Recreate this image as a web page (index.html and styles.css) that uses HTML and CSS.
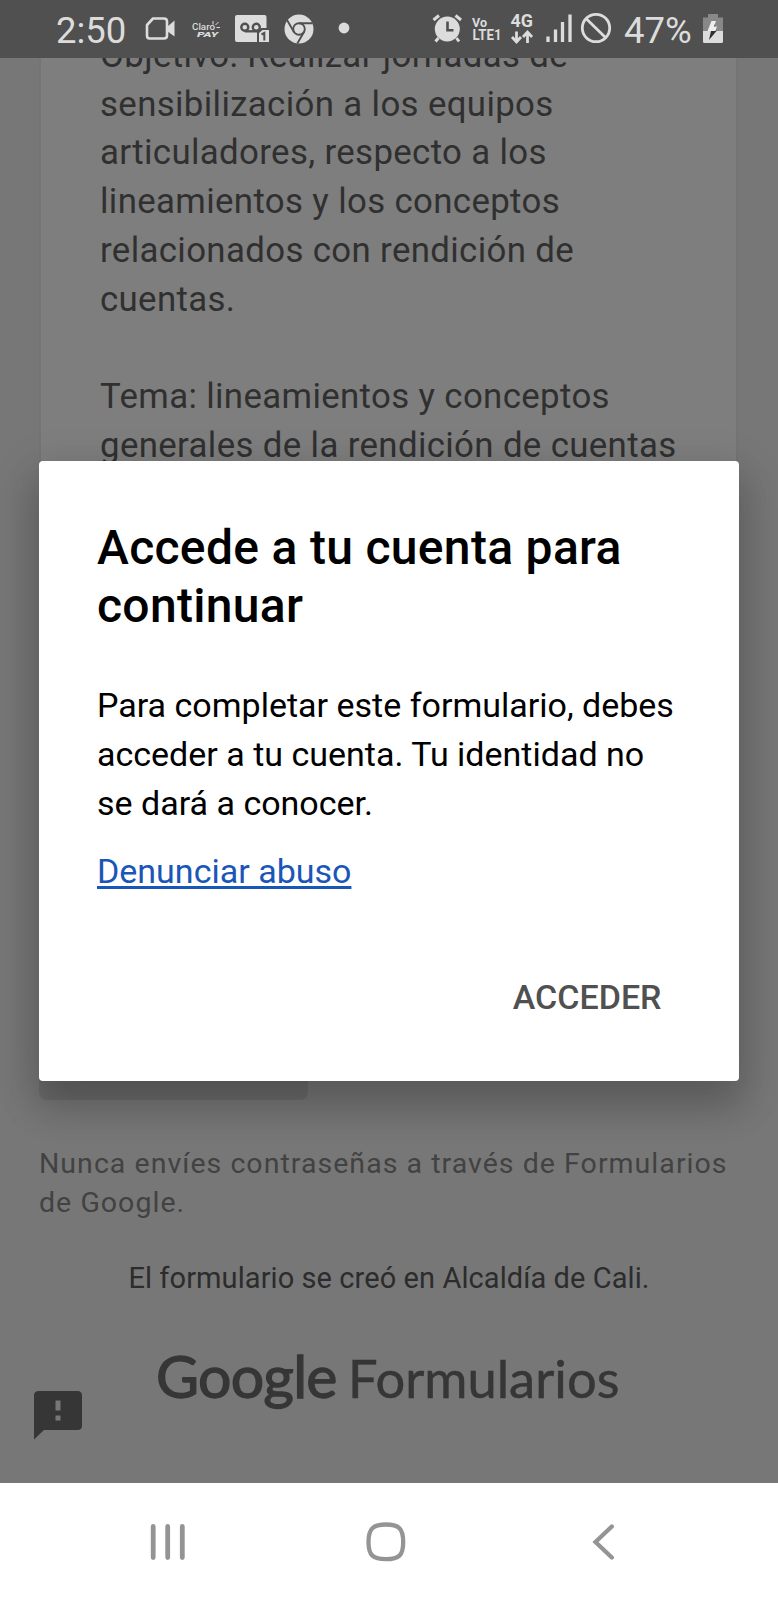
FILE: index.html
```html
<!DOCTYPE html>
<html lang="es">
<head>
<meta charset="utf-8">
<title>Formularios de Google</title>
<link rel="stylesheet" href="styles.css">
</head>
<body>
<div class="screen">
  <header class="status">
    <span class="clock">2:50</span>
    <svg class="ic cam" width="32" height="28" viewBox="144 15 32 28"><path d="M153 18.5H164Q167 18.5 167 21.5V35.500Q167 38.500 164 38.500H149.500Q147 38.500 147 35.500V25Z" fill="none" stroke="#dcdcdc" stroke-width="2.600" stroke-linejoin="round"/><path d="M167 27L174.500 20.500V36.500L167 31Z" fill="#dcdcdc"/></svg>
    <svg class="ic claro" width="30" height="20" viewBox="191 19 30 20"><text x="192" y="29.600" font-size="9.500" font-weight="500" textLength="23" lengthAdjust="spacingAndGlyphs">Claro</text><text x="197" y="36.800" font-size="7.500" font-weight="900" font-style="italic" textLength="21" lengthAdjust="spacingAndGlyphs">PAY</text><path d="M213 24.500V21M215.500 25L218.500 22M216.500 27.500H220" stroke="#dcdcdc" stroke-width="1"/></svg>
    <svg class="ic vm" width="36" height="30" viewBox="234 14 36 30"><rect x="235" y="15" width="31.500" height="27" rx="2" fill="#dcdcdc"/><g fill="none" stroke="#505050" stroke-width="2.400"><circle cx="244.800" cy="27.300" r="3.500"/><circle cx="256.300" cy="27.300" r="3.500"/><path d="M244.800 31.300H258"/></g><path d="M257 43V32L261 28H270V43Z" fill="#505050"/><path d="M259 42V33L262.500 30H269V42Z" fill="#dcdcdc"/><path d="M261.500 34.500L264.300 33V40.500" fill="none" stroke="#505050" stroke-width="2"/></svg>
    <svg class="ic chrome" width="30" height="30" viewBox="283.500 13.500 30 30"><circle cx="298.500" cy="28.500" r="14.500" fill="#dcdcdc"/><g fill="none" stroke="#505050" stroke-width="1.900"><circle cx="298.500" cy="28.500" r="5.800"/><path d="M298.500 22.700H312M293.500 31.400L286.500 19.500M303.500 31.400L296.800 43"/></g></svg>
    <svg class="ic dot" width="12" height="12" viewBox="0 0 12 12"><circle cx="6" cy="6" r="5.400" fill="#dcdcdc"/></svg>
    <svg class="ic alarm" width="32" height="32" viewBox="431 12 32 32"><circle cx="447.300" cy="29" r="12.500" fill="#dcdcdc"/><path d="M433.500 20L439 15.500M461 20L455.500 15.500M438.500 38L435.500 41.500M456.500 38L459 41.500" stroke="#dcdcdc" stroke-width="3"/><path d="M447.500 21.500V30.300H453.500" fill="none" stroke="#505050" stroke-width="2.600"/></svg>
    <svg class="ic volte" width="32" height="26" viewBox="471 16 32 26"><text x="472" y="27.300" font-size="13.500" font-weight="700" textLength="15" lengthAdjust="spacingAndGlyphs">Vo</text><text x="472.500" y="40" font-size="14" font-weight="700" textLength="29" lengthAdjust="spacingAndGlyphs">LTE1</text></svg>
    <svg class="ic net" width="24" height="32" viewBox="510 13 24 32"><text x="510.500" y="27.300" font-size="17.500" font-weight="700" textLength="22.500" lengthAdjust="spacingAndGlyphs">4G</text><path d="M516.500 31.500V41M512 37L516.500 42L521 37M527.500 43V33M523 37L527.500 32L532 37" fill="none" stroke="#dcdcdc" stroke-width="2.800"/></svg>
    <svg class="ic sig" width="28" height="30" viewBox="545 14 28 30"><path d="M548 42V36.500M555.500 42V29.500M562.500 42V22M570 42V14.500" stroke="#dcdcdc" stroke-width="3.300"/></svg>
    <svg class="ic no" width="32" height="32" viewBox="580 12 32 32"><circle cx="596" cy="28" r="13.700" fill="none" stroke="#dcdcdc" stroke-width="2.800"/><path d="M586 18.500L606 38" stroke="#dcdcdc" stroke-width="2.800"/></svg>
    <span class="pct">47%</span>
    <svg class="ic bat" width="22" height="32" viewBox="702 13 22 32"><path d="M708 14H718V17.500H723V31H703V17.500H708Z" fill="#888"/><path d="M703 31H723V41.500Q723 43 721.500 43H704.500Q703 43 703 41.500Z" fill="#dcdcdc"/><path d="M714 21L707.500 31H711L709 40L716.500 31Z" fill="#303030"/><path d="M711.500 21H716L714 26.500H717L715.500 31H707.500Z" fill="#eee"/></svg>
  </header>

  <main class="page">
    <section class="card">
      <p>Objetivo: Realizar jornadas de<br>sensibilización a los equipos<br>articuladores, respecto a los<br>lineamientos y los conceptos<br>relacionados con rendición de<br>cuentas.</p>
      <p>Tema: lineamientos y conceptos<br>generales de la rendición de cuentas</p>
    </section>
    <div class="submit"></div>
    <p class="warning">Nunca envíes contraseñas a través de Formularios<br>de Google.</p>
    <p class="origin">El formulario se creó en Alcaldía de Cali.</p>
    <div class="brand"><span class="google">Google</span><span class="forms">Formularios</span></div>
    <svg class="report" width="49" height="49" viewBox="0 0 49 49"><path fill="#363636" fill-rule="evenodd" d="M5 0H43.500Q48 0 48 4.500V34.500Q48 39 43.500 39H10L0 48.500V4.500Q0 0 5 0ZM21.500 9.500V19.500H26.500V9.500ZM21.500 24.500V29.500H26.500V24.500Z"/></svg>
  </main>

  <div class="dialog" role="dialog">
    <h1>Accede a tu cuenta para<br>continuar</h1>
    <p class="msg">Para completar este formulario, debes<br>acceder a tu cuenta. Tu identidad no<br>se dará a conocer.</p>
    <a class="abuse">Denunciar abuso</a>
    <div class="actions"><span>ACCEDER</span></div>
  </div>

  <nav class="nav">
    <svg width="36" height="38" viewBox="0 0 36 38"><path d="M3.200 3.500V34.500M17.700 3.500V34.500M32.300 3.500V34.500" stroke="#949494" stroke-width="4.800" stroke-linecap="round"/></svg>
    <svg class="home" width="40" height="40" viewBox="0 0 40 40"><path d="M20 2.500C33 2.500 37.200 6.500 37.200 20S33 37.200 20 37.200S2.500 33.500 2.500 20S7 2.500 20 2.500Z" fill="none" stroke="#949494" stroke-width="4.300"/></svg>
    <svg width="24" height="38" viewBox="0 0 24 38"><path d="M19.800 3.500L3.500 19L19.800 34.500" fill="none" stroke="#949494" stroke-width="4.300" stroke-linecap="round"/></svg>
  </nav>
</div>
</body>
</html>
```
FILE: styles.css
```css
* { box-sizing: border-box; margin: 0; padding: 0; }
body { font-family: Roboto, "Liberation Sans", sans-serif; background: #777; }
.screen { position: relative; width: 778px; height: 1600px; overflow: hidden; display: flex; flex-direction: column; }

.status { height: 58px; flex: none; background: #505050; color: #dcdcdc; display: flex; align-items: flex-start; position: relative; z-index: 1; }
.status text { fill: #dcdcdc; font-family: Roboto, sans-serif; }
.status span { font-size: 36.5px; line-height: 61px; white-space: nowrap; }
.clock { margin-left: 56px; width: 72px; }
.pct { margin-left: 12px; width: 70px; }
.ic { flex: none; overflow: visible; }
.cam { margin: 15px 0 0 16px; }
.claro { margin: 19px 0 0 15px; }
.vm { margin: 14px 0 0 13px; }
.chrome { margin: 13.5px 0 0 13.5px; }
.dot { margin: 22px 0 0 24px; }
.alarm { margin: 12px 0 0 81.500px; }
.volte { margin: 16px 0 0 8px; }
.net { margin: 13px 0 0 7px; }
.sig { margin: 14px 0 0 11px; }
.no { margin: 12px 0 0 7px; }
.bat { margin: 13px 0 0 8px; }

.page { flex: 1; min-height: 0; }
.card { margin: -40px 40px 0 39px; height: 620px; padding: 13px 0 0 59px; background: #7e7e7e; border: 1px solid #747474; border-width: 0 2px; color: #303030; font-size: 34.8px; line-height: 48.7px; letter-spacing: .36px; white-space: nowrap; }
.card p + p { margin-top: 48.7px; }
.submit { margin: 392px 0 0 39px; width: 269px; height: 70px; background: #6c6c6c; border-radius: 8px; }
.warning { margin: 45px 0 0 39px; font-size: 28.5px; line-height: 38.9px; letter-spacing: 1.04px; color: #424242; white-space: nowrap; }
.origin { margin-top: 36px; text-align: center; font-size: 29px; line-height: 38.9px; letter-spacing: .08px; color: #2c2c2c; white-space: nowrap; }
.brand { margin: 42px 0 0 156px; height: 72px; display: flex; align-items: baseline; font-family: Lato, sans-serif; line-height: 72px; color: #363636; white-space: nowrap; }
.google { font-size: 59px; width: 192px; letter-spacing: -.75px; -webkit-text-stroke: 1.3px #363636; }
.forms { font-size: 52.5px; -webkit-text-stroke: .5px #363636; }
.report { display: block; margin: -21px 0 0 34px; }

.dialog { position: absolute; left: 39px; top: 461px; width: 700px; height: 620px; padding: 58px 58px 0; background: #fff; border-radius: 4px; color: #000; white-space: nowrap; box-shadow: 0 24px 38px 3px rgba(0,0,0,.16), 0 13px 46px 6px rgba(0,0,0,.12); }
h1 { font-size: 48px; font-weight: 500; line-height: 57.6px; letter-spacing: .31px; }
.msg { margin-top: 47px; font-size: 34px; line-height: 48.7px; }
.abuse { display: block; margin-top: 20px; font-size: 34px; line-height: 48.7px; color: #1a56b8; text-decoration: underline; text-decoration-thickness: 3px; text-underline-offset: 3px; text-decoration-skip-ink: none; }
.actions { margin-top: 77px; padding-right: 19.5px; text-align: right; font-size: 34px; font-weight: 500; line-height: 48.7px; color: #505050; }

.nav { flex: none; height: 117px; background: #fff; position: relative; display: flex; align-items: center; padding: 1px 162px 0 150px; justify-content: space-between; }
.home { margin-right: 7px; }
```
